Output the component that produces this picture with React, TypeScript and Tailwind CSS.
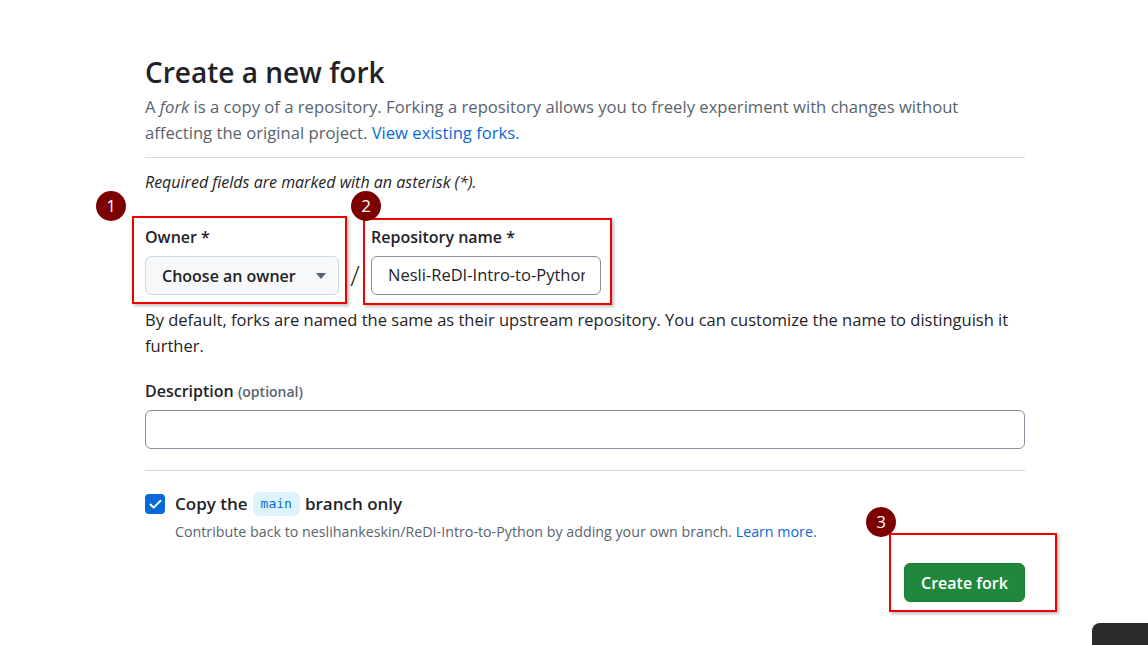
import { Check } from 'lucide-react';

const sans = { fontFamily: '"Open Sans", "Noto Sans", "Liberation Sans", sans-serif' };

function Badge({ n, className }: { n: number; className: string }) {
  return (
    <div
      className={`absolute w-[30px] h-[30px] rounded-full bg-[#7d0000] text-white text-[17px] leading-[30px] text-center ${className}`}
    >
      {n}
    </div>
  );
}

function Mark({ className }: { className: string }) {
  return <div className={`absolute border-2 border-[#ee0000] shadow-[2px_2px_3px_rgba(0,0,0,0.25)] ${className}`} />;
}

export default function App() {
  return (
    <div className="relative w-[1148px] h-[645px] overflow-hidden bg-white text-[#1f2328]" style={sans}>
      <div className="ml-[145px] w-[880px] flex flex-col">
        {/* Header */}
        <h1 className="mt-[54px] text-[28px] leading-[36px] font-semibold">Create a new fork</h1>
        <p className="mt-[4px] max-w-[835px] text-[16.65px] leading-[26px] text-[#59636e]">
          A <em>fork</em> is a copy of a repository. Forking a repository allows you to freely experiment with changes
          without affecting the original project. <span className="text-[#0969da]">View existing forks.</span>
        </p>
        <div className="mt-[11px] border-t border-[#d1d9e0]" />
        <p className="mt-[12px] text-[16px] leading-[24px] italic">Required fields are marked with an asterisk (*).</p>

        {/* Owner / repo name */}
        <div className="mt-[31px] flex items-end">
          <div className="flex flex-col w-[194px]">
            <label className="text-[16px] leading-[24px] font-semibold">Owner *</label>
            <button className="mt-[7px] h-[39px] flex items-center justify-between pl-4 pr-[12px] rounded-md border border-[#d1d9e0] bg-[#f6f8fa] text-[16px] font-semibold">
              <span>Choose an owner</span>
              <svg width="10" height="6" viewBox="0 0 10 6">
                <path d="M0 0h10L5 6z" fill="#59636e" />
              </svg>
            </button>
          </div>
          <span className="w-[32px] text-center text-[28px] leading-[39px] text-[#1f2328] font-light">/</span>
          <div className="flex flex-col w-[230px]">
            <label className="text-[16px] leading-[24px] font-semibold">Repository name *</label>
            <div className="mt-[7px] h-[39px] flex items-center pl-4 pr-[15px] rounded-md border border-[#858f9b] text-[16.5px]">
              <span className="overflow-hidden whitespace-nowrap">Nesli-ReDI-Intro-to-Python</span>
            </div>
          </div>
        </div>
        <p className="mt-[12px] text-[16.5px] leading-[26px]">
          By default, forks are named the same as their upstream repository. You can customize the name to distinguish it
          further.
        </p>

        {/* Description */}
        <label className="mt-[20px] text-[16px] leading-[24px] font-semibold">
          Description <span className="text-[14px] text-[#59636e]">(optional)</span>
        </label>
        <div className="mt-[6px] h-[39px] rounded-md border border-[#858f9b]" />
        <div className="mt-[21px] border-t border-[#d1d9e0]" />

        {/* Branch option */}
        <div className="mt-[21px] flex items-center h-[24px]">
          <div className="w-[20px] h-[20px] rounded-[4px] bg-[#0969da] flex items-center justify-center">
            <Check className="w-[15px] h-[15px] text-white" strokeWidth={3} />
          </div>
          <span className="ml-[10px] text-[17px] font-semibold">Copy the</span>
          <code
            className="mx-[5px] px-[8px] h-[24px] leading-[24px] rounded-md bg-[#ddf4ff] text-[#0969da] text-[13px]"
            style={{ fontFamily: '"DejaVu Sans Mono", "Liberation Mono", monospace' }}
          >
            main
          </code>
          <span className="text-[17px] font-semibold">branch only</span>
        </div>
        <p className="mt-[6px] ml-[30px] text-[14.25px] leading-[20px] text-[#59636e]">
          Contribute back to neslihankeskin/ReDI-Intro-to-Python by adding your own branch.{' '}
          <span className="text-[#0969da]">Learn more.</span>
        </p>

        <div className="mt-[21px] flex justify-end">
          <button className="h-[39px] w-[121px] rounded-md bg-[#1f883d] text-white text-[16px] font-semibold border border-[#1a7f37]">
            Create fork
          </button>
        </div>
      </div>

      {/* Annotations */}
      <Mark className="left-[132px] top-[216px] w-[215px] h-[88px]" />
      <Mark className="left-[363px] top-[218px] w-[249px] h-[87px]" />
      <Mark className="left-[889px] top-[533px] w-[168px] h-[79px]" />
      <Badge n={1} className="left-[96px] top-[191px]" />
      <Badge n={2} className="left-[351px] top-[191px]" />
      <Badge n={3} className="left-[866px] top-[507px]" />

      <div className="absolute left-[1092px] top-[623px] w-[70px] h-[40px] rounded-tl-lg bg-[#2b2b2b]" />
    </div>
  );
}
